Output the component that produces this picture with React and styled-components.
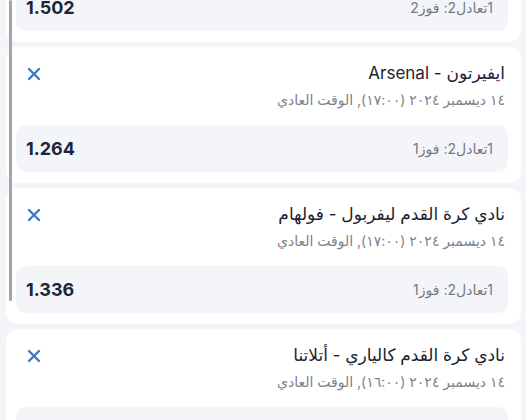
import React from "react";
import styled, { createGlobalStyle } from "styled-components";

const GlobalStyle = createGlobalStyle`
  html, body {
    margin: 0;
    padding: 0;
    background: #f4f5f8;
    overflow: hidden;
  }
  body {
    font-family: Inter, "DejaVu Sans", sans-serif;
  }
`;

const Screen = styled.div`
  position: relative;
  width: 526px;
  height: 420px;
  overflow: hidden;
  background: #f4f5f8;
`;

const List = styled.div`
  direction: rtl;
  display: flex;
  flex-direction: column;
  gap: 5px;
  padding: 0 5px 0 6px;
  margin-top: -94px;
`;

const ScrollThumb = styled.div`
  position: absolute;
  left: 9px;
  top: 0;
  width: 3px;
  height: 301px;
  border-radius: 2px;
  background: #a4a5a8;
`;

const Card = styled.div`
  background: #ffffff;
  border-radius: 12px;
  padding: 14px 13px 11px 10px;
  display: flex;
  flex-direction: column;
`;

const Header = styled.div`
  display: flex;
  align-items: flex-start;
  justify-content: space-between;
  padding: 0 3px 0 11px;
`;

const Info = styled.div`
  display: flex;
  flex-direction: column;
  gap: 4px;
`;

const Title = styled.div`
  font-size: 17px;
  line-height: 24px;
  color: #1c2330;
  white-space: nowrap;
`;

const Meta = styled.div`
  font-size: 14px;
  line-height: 22px;
  color: #7b828d;
  white-space: nowrap;
`;

const CloseButton = styled.button`
  border: 0;
  background: none;
  padding: 0;
  margin-top: 6px;
  width: 14px;
  height: 14px;
  display: flex;
  cursor: pointer;
`;

const Odds = styled.div`
  margin-top: 14px;
  height: 47px;
  border-radius: 10px;
  background: #f3f5f8;
  display: flex;
  align-items: center;
  justify-content: space-between;
  padding: 0 15px 0 10px;
`;

const Market = styled.span`
  font-size: 14px;
  color: #737a85;
`;

const Price = styled.span`
  font-size: 18px;
  font-weight: 700;
  color: #1b2739;
  direction: ltr;
`;

const CloseIcon = () => (
  <svg width="14" height="14" viewBox="0 0 14 14">
    <path
      d="M2 2 L12 12 M12 2 L2 12"
      stroke="#3b7ac6"
      strokeWidth="2.4"
      strokeLinecap="round"
    />
  </svg>
);

const bets = [
  {
    title: "نادي كرة القدم تشيلسي - برينتفورد",
    date: "١٤ ديسمبر ٢٠٢٤ (١٧:٠٠), الوقت العادي",
    market: "1تعادل2: فوز2",
    price: "1.502",
  },
  {
    title: "ايفيرتون - Arsenal",
    date: "١٤ ديسمبر ٢٠٢٤ (١٧:٠٠), الوقت العادي",
    market: "1تعادل2: فوز1",
    price: "1.264",
  },
  {
    title: "نادي كرة القدم ليفربول - فولهام",
    date: "١٤ ديسمبر ٢٠٢٤ (١٧:٠٠), الوقت العادي",
    market: "1تعادل2: فوز1",
    price: "1.336",
  },
  {
    title: "نادي كرة القدم كالياري - أتلاتنا",
    date: "١٤ ديسمبر ٢٠٢٤ (١٦:٠٠), الوقت العادي",
    market: "1تعادل2: فوز1",
    price: "1.410",
  },
];

const App = () => {
  return (
    <Screen>
      <GlobalStyle />
      <List>
        {bets.map((bet, i) => (
          <Card key={i}>
            <Header>
              <Info>
                <Title>{bet.title}</Title>
                <Meta>{bet.date}</Meta>
              </Info>
              <CloseButton aria-label="remove">
                <CloseIcon />
              </CloseButton>
            </Header>
            <Odds>
              <Market>{bet.market}</Market>
              <Price>{bet.price}</Price>
            </Odds>
          </Card>
        ))}
      </List>
      <ScrollThumb />
    </Screen>
  );
};

export default App;
